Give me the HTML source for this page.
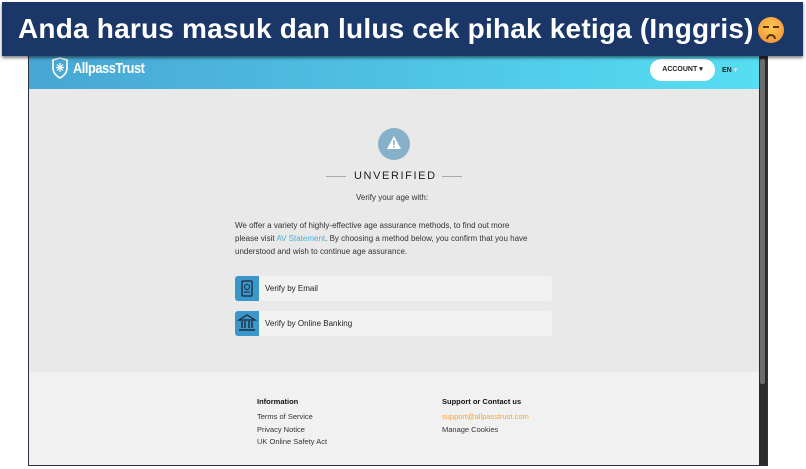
<!DOCTYPE html>
<html><head><meta charset="utf-8"><style>
*{margin:0;padding:0;box-sizing:border-box}
body{width:806px;height:469px;background:#fff;position:relative;overflow:hidden;font-family:"Liberation Sans",sans-serif}
.frame{position:absolute;left:28px;top:50px;width:740px;height:416px;border:1px solid #2a3346;background:#e9e9e9;overflow:hidden}
.hdr{position:absolute;left:0;top:0;width:731px;height:38px;background:linear-gradient(90deg,#48a6d3,#56def3)}
.scroll{position:absolute;right:0;top:0;width:8px;height:100%;background:#2b2b2b}
.scroll:before{content:"";position:absolute;left:1px;top:8px;width:5px;height:325px;background:#6b6b6b;border-radius:2px}
.main{position:absolute;left:0;top:38px;width:731px;height:283px;background:#e9e9e9}
.foot{position:absolute;left:0;top:321px;width:731px;height:95px;background:#f1f1f1}
.banner{position:absolute;left:2px;top:2px;width:801px;height:54px;background:#1b3768;box-shadow:0 2px 3px rgba(0,0,0,.5);color:#fff;font-size:28px;font-weight:bold;line-height:54px;padding-left:16px;letter-spacing:.2px;z-index:5;white-space:nowrap}
.t{position:absolute;color:#333;font-size:8px;white-space:nowrap}
.btn{position:absolute;left:206px;width:317px;height:25px;background:#f2f2f2;border-radius:3px}
.btn .ic{position:absolute;left:0;top:0;width:24px;height:25px;background:#3b96c9;border-radius:3px 0 0 3px}
.btn span{position:absolute;left:30px;top:8px;font-size:8px;color:#222}
</style></head><body>
<div class="banner">Anda harus masuk dan lulus cek pihak ketiga (Inggris)<span style="display:inline-block;width:26px;height:26px;margin-left:4px;border-radius:50%;background:radial-gradient(circle at 50% 40%,#ffc94d,#f08a3a);vertical-align:-5px;position:relative"><span style="position:absolute;left:5px;top:9px;width:6px;height:2px;background:#5a3210"></span><span style="position:absolute;left:15px;top:9px;width:6px;height:2px;background:#5a3210"></span><span style="position:absolute;left:8px;top:17px;width:10px;height:5px;border:2px solid #5a3210;border-bottom:none;border-radius:6px 6px 0 0"></span></span></div>
<div class="frame">
 <div class="hdr">
  <svg style="position:absolute;left:22px;top:6px" width="18" height="22" viewBox="0 0 18 22"><path d="M2 3 L9 1 L16 3 L16 11 Q16 17 9 21 Q2 17 2 11 Z" fill="none" stroke="#fff" stroke-width="1.6"/><path d="M9 6v9M5 10.5h8M6 7.5l6 6M12 7.5l-6 6" stroke="#fff" stroke-width="1.2"/></svg>
  <div style="position:absolute;left:44px;top:9px;color:#fff;font-size:15px;font-weight:bold;letter-spacing:-.5px;transform:scaleX(.85);transform-origin:left">AllpassTrust</div>
  <div style="position:absolute;left:621px;top:8px;width:65px;height:22px;background:#fff;border-radius:11px;font-size:7px;font-weight:bold;color:#222;text-align:center;line-height:22px">ACCOUNT ▾</div>
  <div style="position:absolute;left:693px;top:15px;font-size:7px;font-weight:bold;color:#222">EN <span style="color:#ddd">▾</span></div>
 </div>
 <div class="main">
  <div style="position:absolute;left:349px;top:39px;width:32px;height:32px;border-radius:50%;background:#87b0ca"></div>
  <svg style="position:absolute;left:357px;top:46px" width="16" height="15" viewBox="0 0 16 15"><path d="M8 1 L15 14 H1 Z" fill="#fff"/><rect x="7.2" y="5" width="1.6" height="5" fill="#87b0ca"/><rect x="7.2" y="11" width="1.6" height="1.6" fill="#87b0ca"/></svg>
  <div style="position:absolute;left:297px;top:87px;width:20px;height:1px;background:#aaa"></div>
  <div style="position:absolute;left:413px;top:87px;width:20px;height:1px;background:#aaa"></div>
  <div class="t" style="left:325px;top:81px;font-size:11px;letter-spacing:1.6px;color:#222">UNVERIFIED</div>
  <div class="t" style="left:327px;top:104px">Verify your age with:</div>
  <div class="t" style="left:206px;top:130px;line-height:13px">We offer a variety of highly-effective age assurance methods, to find out more<br>please visit <span style="color:#4bb0d6">AV Statement</span>. By choosing a method below, you confirm that you have<br>understood and wish to continue age assurance.</div>
  <div class="btn" style="top:187px"><div class="ic"><svg width="24" height="25" viewBox="0 0 24 25"><rect x="7" y="5" width="10" height="15" rx="1" fill="none" stroke="#1b2b3a" stroke-width="1.3"/><circle cx="12" cy="11" r="2.5" fill="none" stroke="#1b2b3a"/><path d="M9 16h6" stroke="#1b2b3a"/></svg></div><span>Verify by Email</span></div>
  <div class="btn" style="top:222px"><div class="ic"><svg width="24" height="25" viewBox="0 0 24 25"><path d="M4 9 L12 4 L20 9 Z" fill="none" stroke="#1b2b3a" stroke-width="1.3"/><path d="M7 10v7M10 10v7M14 10v7M17 10v7M4 19h16" stroke="#1b2b3a" stroke-width="1.4"/></svg></div><span>Verify by Online Banking</span></div>
 </div>
 <div class="foot">
  <div class="t" style="left:228px;top:25px;font-weight:bold;color:#111;font-size:7.5px">Information</div>
  <div class="t" style="left:228px;top:39px;font-size:7.5px;line-height:12.7px">Terms of Service<br>Privacy Notice<br>UK Online Safety Act</div>
  <div class="t" style="left:413px;top:25px;font-weight:bold;color:#111;font-size:7.5px">Support or Contact us</div>
  <div class="t" style="left:413px;top:39px;font-size:7.5px;line-height:12.7px"><span style="color:#f0a43a">support@allpasstrust.com</span><br>Manage Cookies</div>
 </div>
 <div class="scroll"></div>
</div>
</body></html>
